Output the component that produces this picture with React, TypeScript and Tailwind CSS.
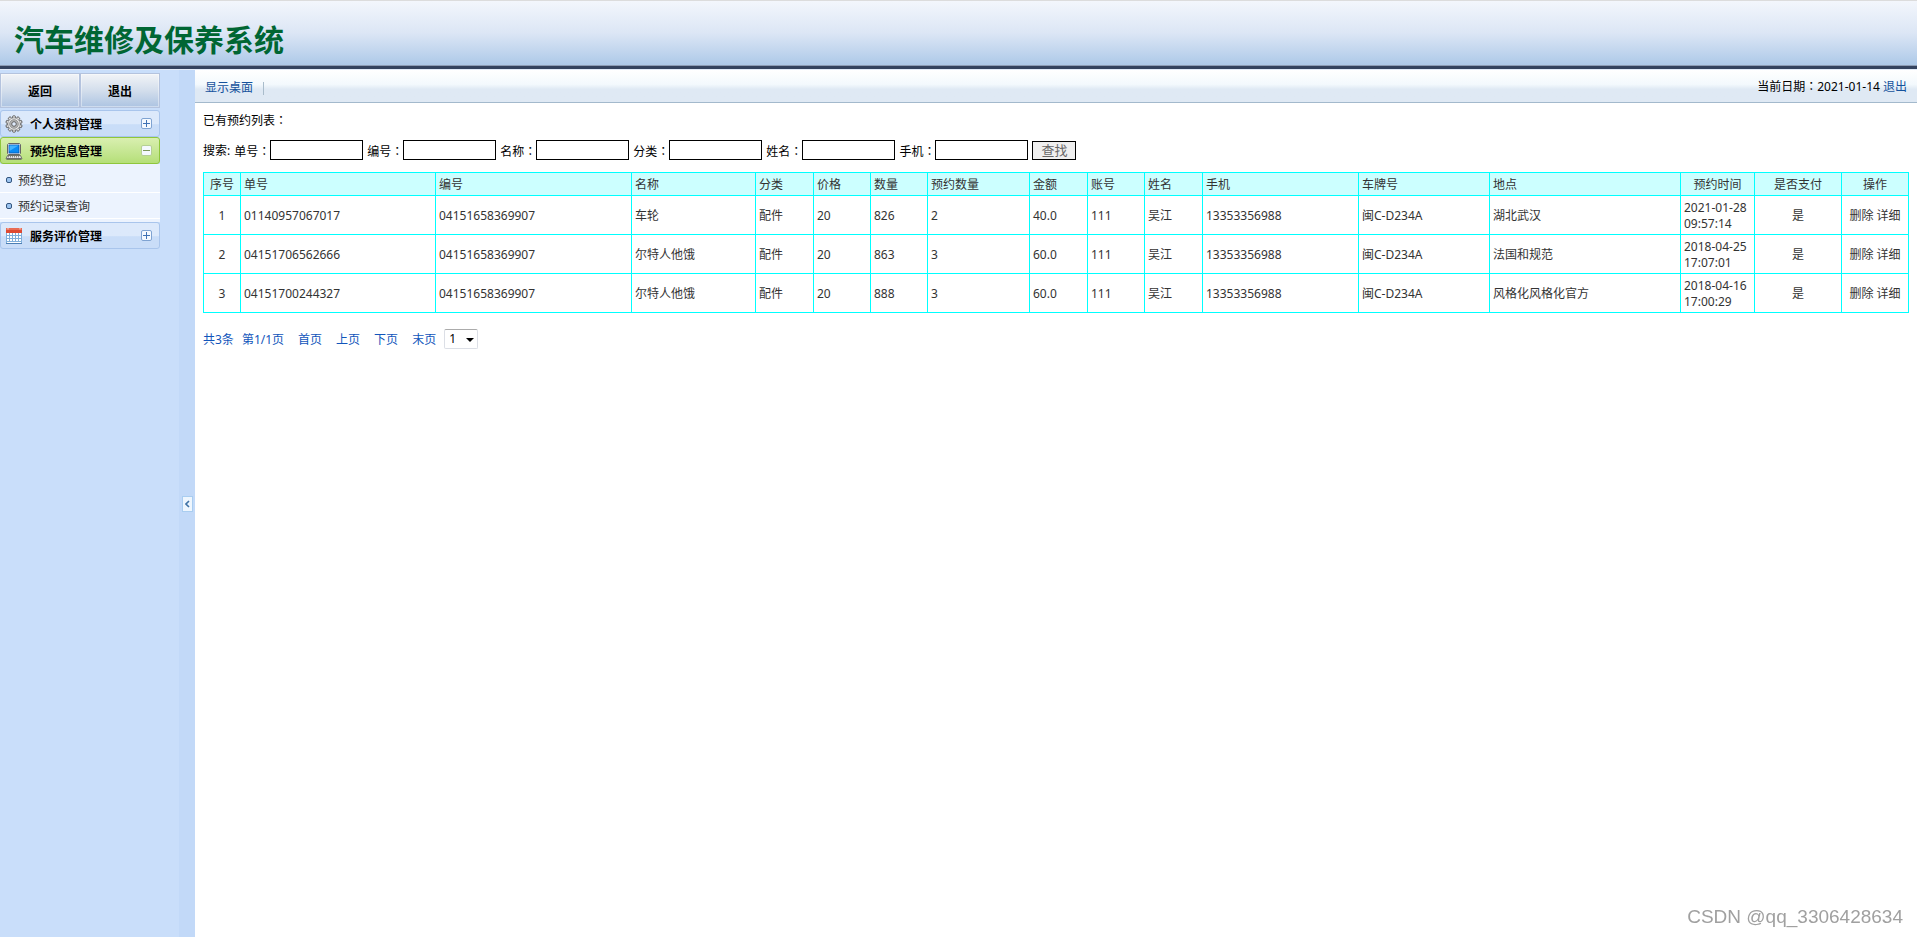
import type { ReactNode } from "react";

const columns = [
	{ header: "序号", width: "w-[37px]", center: true },
	{ header: "单号", width: "w-[195px]" },
	{ header: "编号", width: "w-[196px]" },
	{ header: "名称", width: "w-[124px]" },
	{ header: "分类", width: "w-[58px]" },
	{ header: "价格", width: "w-[57px]" },
	{ header: "数量", width: "w-[57px]" },
	{ header: "预约数量", width: "w-[102px]" },
	{ header: "金额", width: "w-[58px]" },
	{ header: "账号", width: "w-[57px]" },
	{ header: "姓名", width: "w-[58px]" },
	{ header: "手机", width: "w-[156px]" },
	{ header: "车牌号", width: "w-[131px]" },
	{ header: "地点", width: "w-auto" },
	{ header: "预约时间", width: "w-[74px]", center: true },
	{ header: "是否支付", width: "w-[87px]", center: true },
	{ header: "操作", width: "w-[67px]", center: true },
];

const bookings = [
	["1", "01140957067017", "04151658369907", "车轮", "配件", "20", "826", "2", "40.0", "111", "吴江", "13353356988", "闽C-D234A", "湖北武汉", "2021-01-28 09:57:14", "是"],
	["2", "04151706562666", "04151658369907", "尔特人他饿", "配件", "20", "863", "3", "60.0", "111", "吴江", "13353356988", "闽C-D234A", "法国和规范", "2018-04-25 17:07:01", "是"],
	["3", "04151700244327", "04151658369907", "尔特人他饿", "配件", "20", "888", "3", "60.0", "111", "吴江", "13353356988", "闽C-D234A", "风格化风格化官方", "2018-04-16 17:00:29", "是"],
];

const searchFields = [
	{ id: "orderNo", label: "单号" },
	{ id: "itemNo", label: "编号" },
	{ id: "itemName", label: "名称" },
	{ id: "category", label: "分类" },
	{ id: "person", label: "姓名" },
	{ id: "phone", label: "手机" },
];

const TIME_COLUMN = 14;

// the traditional cut of the font centres the full-width colon
function Colon() {
	return <span className="font-['Noto_Sans_CJK_TC',sans-serif]">：</span>;
}

function GearIcon() {
	return (
		<svg width="18" height="18" viewBox="0 0 18 18" className="shrink-0">
			<g fill="#e4e4e4" stroke="#555" strokeWidth="0.9">
				{[0, 36, 72, 108, 144, 180, 216, 252, 288, 324].map((angle) => (
					<rect key={angle} x="7.6" y="0.8" width="2.8" height="4" rx="0.8" transform={`rotate(${angle} 9 9)`} />
				))}
			</g>
			<circle cx="9" cy="9" r="6.2" fill="#e6e6e6" stroke="#808080" strokeWidth="0.6" />
			<circle cx="9" cy="9" r="4.3" fill="#b8b8b8" stroke="#858585" strokeWidth="0.8" />
			<circle cx="9" cy="9" r="2.3" fill="#dfeafa" stroke="#555" strokeWidth="0.9" />
		</svg>
	);
}

function ComputerIcon() {
	return (
		<svg width="18" height="18" viewBox="0 0 18 18" className="shrink-0">
			<path d="M3.5 1.5h11l1 1v9l-1 1h-11l-1-1v-9z" fill="#efefef" stroke="#666" />
			<rect x="4" y="3" width="10" height="8" fill="#0a8cf5" stroke="#0654ad" strokeWidth="0.8" />
			<path d="M4.5 3.5h9L4.5 9z" fill="#43b4ff" />
			<path d="M2.5 13.5h13l1.5 3.5H1z" fill="#e4e4e4" stroke="#555" strokeWidth="0.8" />
			<path d="M3 14.8h12" stroke="#555" strokeWidth="0.9" strokeDasharray="1 1" />
			<path d="M2 16.9h14" stroke="#444" />
		</svg>
	);
}

function CalendarIcon() {
	return (
		<svg width="18" height="18" viewBox="0 0 18 18" className="shrink-0">
			<rect x="1" y="1" width="16" height="16" fill="#7faeda" />
			<rect x="1" y="1" width="16" height="5" fill="#de4a32" />
			<path d="M1 2h16" stroke="#f28f78" />
			<path d="M3 1v1.5M15 1v1.5" stroke="#fbd2c8" />
			{[6, 9, 12].map((y) =>
				[2, 5, 8, 11, 14].map((x) => (
					<rect key={`${x}-${y}`} x={x} y={y} width="2" height="2" fill="#fff" />
				)),
			)}
			<path d="M2 15.5h14" stroke="#fff" />
			<path d="M1 16.5h16" stroke="#4c7fb4" />
		</svg>
	);
}

function ToggleIcon({ open }: { open?: boolean }) {
	return (
		<svg width="11" height="11" viewBox="0 0 11 11" className="shrink-0">
			<rect x="0.5" y="0.5" width="10" height="10" rx="1.5" fill="#f4f9ff" stroke={open ? "#b5cf96" : "#7fa3d2"} />
			<path d={open ? "M2 5.5h7" : "M2 5.5h7M5.5 2v7"} stroke={open ? "#7c985c" : "#3f72b5"} />
		</svg>
	);
}

interface MenuHeadProps {
	icon: ReactNode,
	title: string,
	open?: boolean,
}

function MenuHead({ icon, title, open }: MenuHeadProps) {
	return (
		<button
			className={`flex h-[27px] w-full items-center rounded-[3px] border pr-[7px] pl-[4px] text-left font-bold text-black ${
				open
					? "border-[#8fc63c] bg-linear-to-b from-[#d9efb0] to-[#b5df78]"
					: "border-[#a9c5ec] bg-linear-to-b from-[#dce9fb] from-50% to-[#c9ddf8] to-55%"
			}`}
		>
			{icon}
			<span className="ml-[7px] flex-1 pt-[2px]">{title}</span>
			<ToggleIcon open={open} />
		</button>
	);
}

function MenuItem({ title }: { title: string }) {
	return (
		<a href="#" className="flex h-[26px] items-center gap-[6px] border-b border-white pl-[6px] text-[#333]">
			<span className="size-[6px] rounded-[2px] border border-[#33557f] bg-[#9cc4f0]" />
			<span className="pt-[2px]">{title}</span>
		</a>
	);
}

function TopButton({ title }: { title: string }) {
	return (
		<button className="flex-1 border border-[#b4c3de] bg-linear-to-b from-[#f2f4f7] via-[#d3deec] via-50% to-[#adc4e2] pt-[2px] font-bold text-black inset-ring inset-ring-white/40">
			{title}
		</button>
	);
}

function Sidebar() {
	return (
		<aside className="flex w-[195px] shrink-0 bg-[#c9defa]">
			<div className="w-[160px] pt-[3px]">
				<div className="flex h-[35px]">
					<TopButton title="返回" />
					<TopButton title="退出" />
				</div>
				<nav className="pt-[2px]">
					<MenuHead icon={<GearIcon />} title="个人资料管理" />
					<MenuHead icon={<ComputerIcon />} title="预约信息管理" open />
					<div className="bg-[#ecf3fe] py-[3px]">
						<MenuItem title="预约登记" />
						<MenuItem title="预约记录查询" />
					</div>
					<MenuHead icon={<CalendarIcon />} title="服务评价管理" />
				</nav>
			</div>
			<div className="ml-auto flex w-[16px] items-center justify-end bg-[#c2d9f8] pr-[2px]">
				<button aria-label="收起" className="flex h-[16px] w-[11px] items-center justify-center border border-[#a9cdf0] bg-[#eef6fe]">
					<svg width="5" height="8" viewBox="0 0 5 8">
						<path d="M4 1L1 4l3 3" fill="none" stroke="#3f72a5" strokeWidth="1.6" />
					</svg>
				</button>
			</div>
		</aside>
	);
}

function BookingTable() {
	return (
		<table className="w-full table-fixed border-collapse text-[#333]">
			<thead>
				<tr className="h-[23px] bg-[#ccffff]">
					{columns.map((col) => (
						<th
							key={col.header}
							className={`border border-[#00ffff] px-[3px] pt-[2px] font-normal ${col.width} ${col.center ? "text-center" : "text-left"}`}
						>
							{col.header}
						</th>
					))}
				</tr>
			</thead>
			<tbody>
				{bookings.map((row) => (
					<tr key={row[0]} className="h-[39px]">
						{row.map((cell, i) => (
							<td
								key={i}
								className={`border border-[#00ffff] px-[3px] pt-[2px] ${columns[i].center && i !== TIME_COLUMN ? "text-center" : "text-left"}`}
							>
								{cell}
							</td>
						))}
						<td className="border border-[#00ffff] pt-[2px] text-center whitespace-nowrap">
							<a href="#">删除</a> <a href="#">详细</a>
						</td>
					</tr>
				))}
			</tbody>
		</table>
	);
}

function Pager() {
	return (
		<div className="mt-[16px] flex h-[20px] items-center text-[#1155bb]">
			<div className="flex pt-[2px]">
				<span>共3条</span>
				<span className="ml-[8px]">第1/1页</span>
				<nav className="ml-[14px] flex gap-[14px]">
					<a href="#">首页</a>
					<a href="#">上页</a>
					<a href="#">下页</a>
					<a href="#">末页</a>
				</nav>
			</div>
			<div className="relative ml-[8px]">
				<select aria-label="页码" className="block h-[20px] w-[34px] appearance-none rounded-[2px] border border-[#dcdfe6] border-t-[#ababab] bg-white pl-[4px] text-black">
					<option>1</option>
				</select>
				<svg width="8" height="4" viewBox="0 0 8 4" className="pointer-events-none absolute top-[9px] right-[4px]">
					<path d="M0 0h8L4 4z" fill="#000" />
				</svg>
			</div>
		</div>
	);
}

export default function App() {
	return (
		<div className="flex min-h-screen flex-col bg-white font-['Noto_Sans','Noto_Sans_CJK_SC',sans-serif] text-[12px] leading-[16px] text-black">
			<header className="border-t border-b border-t-[#dcdcdc] border-b-[#e2ecf9]">
				<div className="border-b-3 border-[#33435f]">
					<div className="flex h-[65px] items-center border-b border-[#8c9cb4] bg-linear-to-b from-[#f3f6fc] via-[#dce6f5] via-50% to-[#adc9e8] pt-[14px] pl-[14px]">
						<h1 className="text-[30px] leading-[40px] font-bold text-[#006633]">汽车维修及保养系统</h1>
					</div>
				</div>
			</header>
			<div className="flex flex-1">
				<Sidebar />
				<main className="min-w-0 flex-1">
					<div className="flex h-[33px] items-center justify-between border-b border-[#a3b9cc] bg-linear-to-b from-white via-[#f3f9fd] via-45% to-[#dfe9f4] to-60% px-[10px]">
						<div className="flex items-center pt-[4px] text-[#15529c]">
							<a href="#">显示桌面</a>
							<span className="ml-[10px] h-[13px] w-px bg-[#a9bccb]" />
						</div>
						<div>
							当前日期<Colon />2021-01-14 <a href="#" className="text-[#15529c]">退出</a>
						</div>
					</div>
					<div className="px-[8px] pt-[9px]">
						<p className="h-[16px]">已有预约列表<Colon /></p>
						<form className="my-[12px] flex h-[20px] items-center gap-[4px]">
							<span className="pt-[2px]">搜索:</span>
							{searchFields.map((field) => (
								<div key={field.id} className="flex items-center">
									<label htmlFor={field.id} className="pt-[2px]">{field.label}<Colon /></label>
									<input id={field.id} type="text" className="h-[20px] w-[93px] border border-black bg-white px-[2px]" />
								</div>
							))}
							<button type="button" className="h-[19px] w-[44px] border border-black bg-[#efefef] text-[13px] text-[#666]">查找</button>
						</form>
						<BookingTable />
						<Pager />
					</div>
				</main>
			</div>
			<div className="fixed right-[14px] bottom-[9px] font-['Liberation_Sans',sans-serif] text-[19px] leading-[22px] text-[#a0a0a0]">
				CSDN @qq_3306428634
			</div>
		</div>
	);
}
